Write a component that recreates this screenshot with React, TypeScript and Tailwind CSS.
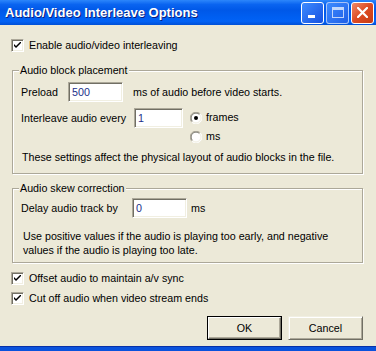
import React from "react";

const FONT = { fontFamily: '"Liberation Sans", Arial, sans-serif' };

// classic sunken 3D edge (edit boxes, check boxes)
const SUNKEN =
  "border border-t-[#ACA899] border-l-[#ACA899] border-r-white border-b-white shadow-[inset_1px_1px_0_#716F64,inset_-1px_-1px_0_#F1EFE2] bg-white";

function CheckBox({ label }: { label: string }) {
  return (
    <div className="flex h-[13px] items-center pl-[11px]">
      <div className={`${SUNKEN} flex h-[13px] w-[13px] items-center justify-center`}>
        <svg width="7" height="7" viewBox="0 0 7 7">
          <path d="M0 2 L0 4 L2 6 L7 1 L7 -1 L2 4 Z" fill="#000" />
        </svg>
      </div>
      <span className="ml-[5px] text-[10.7px] leading-[13px] text-black">{label}</span>
    </div>
  );
}

function Radio({ label, checked }: { label: string; checked?: boolean }) {
  return (
    <div className="flex h-[13px] items-center">
      <svg width="12" height="12" viewBox="0 0 12 12">
        <circle cx="6" cy="6" r="5.5" fill="#fff" />
        <path d="M10.2 1.8 A5.5 5.5 0 0 0 1.8 10.2" stroke="#ACA899" strokeWidth="1" fill="none" />
        <path d="M9.5 2.5 A4.5 4.5 0 0 0 2.5 9.5" stroke="#716F64" strokeWidth="1" fill="none" />
        <path d="M1.8 10.2 A5.5 5.5 0 0 0 10.2 1.8" stroke="#fff" strokeWidth="1" fill="none" />
        <path d="M2.5 9.5 A4.5 4.5 0 0 0 9.5 2.5" stroke="#F1EFE2" strokeWidth="1" fill="none" />
        {checked && <circle cx="6" cy="6" r="2" fill="#000" />}
      </svg>
      <span className="ml-[4px] text-[10.7px] leading-[13px] text-black">{label}</span>
    </div>
  );
}

function Edit({ value, width }: { value: string; width: string }) {
  return (
    <div className={`${SUNKEN} ${width} flex h-[20px] items-center pl-[3px]`}>
      <span className="text-[10.7px] leading-[13px] text-[#1b2f8a]">{value}</span>
    </div>
  );
}

function GroupBox({
  title,
  className,
  children,
}: {
  title: string;
  className: string;
  children: React.ReactNode;
}) {
  return (
    <div
      className={`relative ml-[12px] w-[351px] border border-[#ACA899] shadow-[inset_1px_1px_0_#fff,1px_1px_0_#fff] ${className}`}
    >
      <span className="absolute left-[6px] top-[-7px] bg-[#ECE9D8] px-[1px] text-[10.7px] leading-[13px] text-black">
        {title}
      </span>
      {children}
    </div>
  );
}

function Button({ label, isDefault }: { label: string; isDefault?: boolean }) {
  return (
    <div className={`h-[24px] w-[75px] ${isDefault ? "border border-black" : ""}`}>
      <div
        className={`flex h-full w-full items-center justify-center bg-[#ECE9D8] border ${
          isDefault
            ? "border-t-white border-l-white border-r-[#716F64] border-b-[#716F64] shadow-[inset_-1px_-1px_0_#ACA899]"
            : "border-t-[#F1EFE2] border-l-[#F1EFE2] border-r-[#716F64] border-b-[#716F64] shadow-[inset_1px_1px_0_#fff,inset_-1px_-1px_0_#ACA899]"
        }`}
      >
        <span className="text-[10.7px] leading-[13px] text-black">{label}</span>
      </div>
    </div>
  );
}

function TitleBar() {
  return (
    <div className="flex h-[25px] items-center bg-[linear-gradient(to_bottom,#2c86fb_0%,#0a64f0_18%,#0058e8_40%,#005ff2_70%,#0262f5_85%,#0050d6_100%)] pl-[5px] pr-[2px]">
      <span
        className="flex-1 text-[13px] font-bold leading-[16px] text-white [text-shadow:1px_1px_0_#0a1f80]"
      >
        Audio/Video Interleave Options
      </span>
      <div className="flex items-center gap-[2px]">
        <div className="flex h-[22px] w-[23px] items-end rounded-[3px] border border-white bg-[linear-gradient(135deg,#3d8bff,#1651e0)] pb-[5px] pl-[6px]">
          <div className="h-[3px] w-[7px] bg-white" />
        </div>
        <div className="flex h-[22px] w-[23px] items-center justify-center rounded-[3px] border border-white/60 bg-[linear-gradient(135deg,#3d8bff,#1f5fe6)]">
          <div className="h-[11px] w-[12px] border border-t-[3px] border-white/70" />
        </div>
        <div className="flex h-[22px] w-[23px] items-center justify-center rounded-[3px] border border-white bg-[linear-gradient(135deg,#f08a6a,#dd4a22_50%,#c43c14)]">
          <svg width="11" height="11" viewBox="0 0 11 11">
            <path d="M1 1 L10 10 M10 1 L1 10" stroke="#fff" strokeWidth="2.2" strokeLinecap="square" />
          </svg>
        </div>
      </div>
    </div>
  );
}

export default function App() {
  return (
    <div className="flex h-[351px] w-[376px] flex-col bg-[#ECE9D8]" style={FONT}>
      <TitleBar />

      <div className="flex flex-1 flex-col text-[10.7px] leading-[13px] text-black">
        <div className="mt-[14px]">
          <CheckBox label="Enable audio/video interleaving" />
        </div>

        {/* Audio block placement */}
        <GroupBox title="Audio block placement" className="mt-[18px] h-[104px]">
          <div className="mt-[11px] flex items-center pl-[8px]">
            <span className="w-[47px]">Preload</span>
            <Edit value="500" width="w-[55px]" />
            <span className="ml-[10px]">ms of audio before video starts.</span>
          </div>
          <div className="mt-[6px] flex items-start pl-[8px]">
            <span className="flex h-[20px] w-[113px] items-center">Interleave audio every</span>
            <Edit value="1" width="w-[49px]" />
            <div className="ml-[7px] mt-[3px] flex flex-col gap-[6px]">
              <Radio label="frames" checked />
              <Radio label="ms" />
            </div>
          </div>
          <p className="mt-[8px] pl-[9px]">
            These settings affect the physical layout of audio blocks in the file.
          </p>
        </GroupBox>

        {/* Audio skew correction */}
        <GroupBox title="Audio skew correction" className="mt-[14px] h-[75px]">
          <div className="mt-[9px] flex items-center pl-[8px]">
            <span className="w-[111px]">Delay audio track by</span>
            <Edit value="0" width="w-[55px]" />
            <span className="ml-[4px]">ms</span>
          </div>
          <p className="mt-[11px] pl-[10px] leading-[14px]">
            Use positive values if the audio is playing too early, and negative
            <br />
            values if the audio is playing too late.
          </p>
        </GroupBox>

        <div className="mt-[9px]">
          <CheckBox label="Offset audio to maintain a/v sync" />
        </div>
        <div className="mt-[7px]">
          <CheckBox label="Cut off audio when video stream ends" />
        </div>

        <div className="mt-[11px] flex justify-end gap-[6px] pr-[13px]">
          <Button label="OK" isDefault />
          <Button label="Cancel" />
        </div>
      </div>

      <div className="h-[5px] border-t border-[#0831a8] bg-[#0a52dc]" />
    </div>
  );
}
